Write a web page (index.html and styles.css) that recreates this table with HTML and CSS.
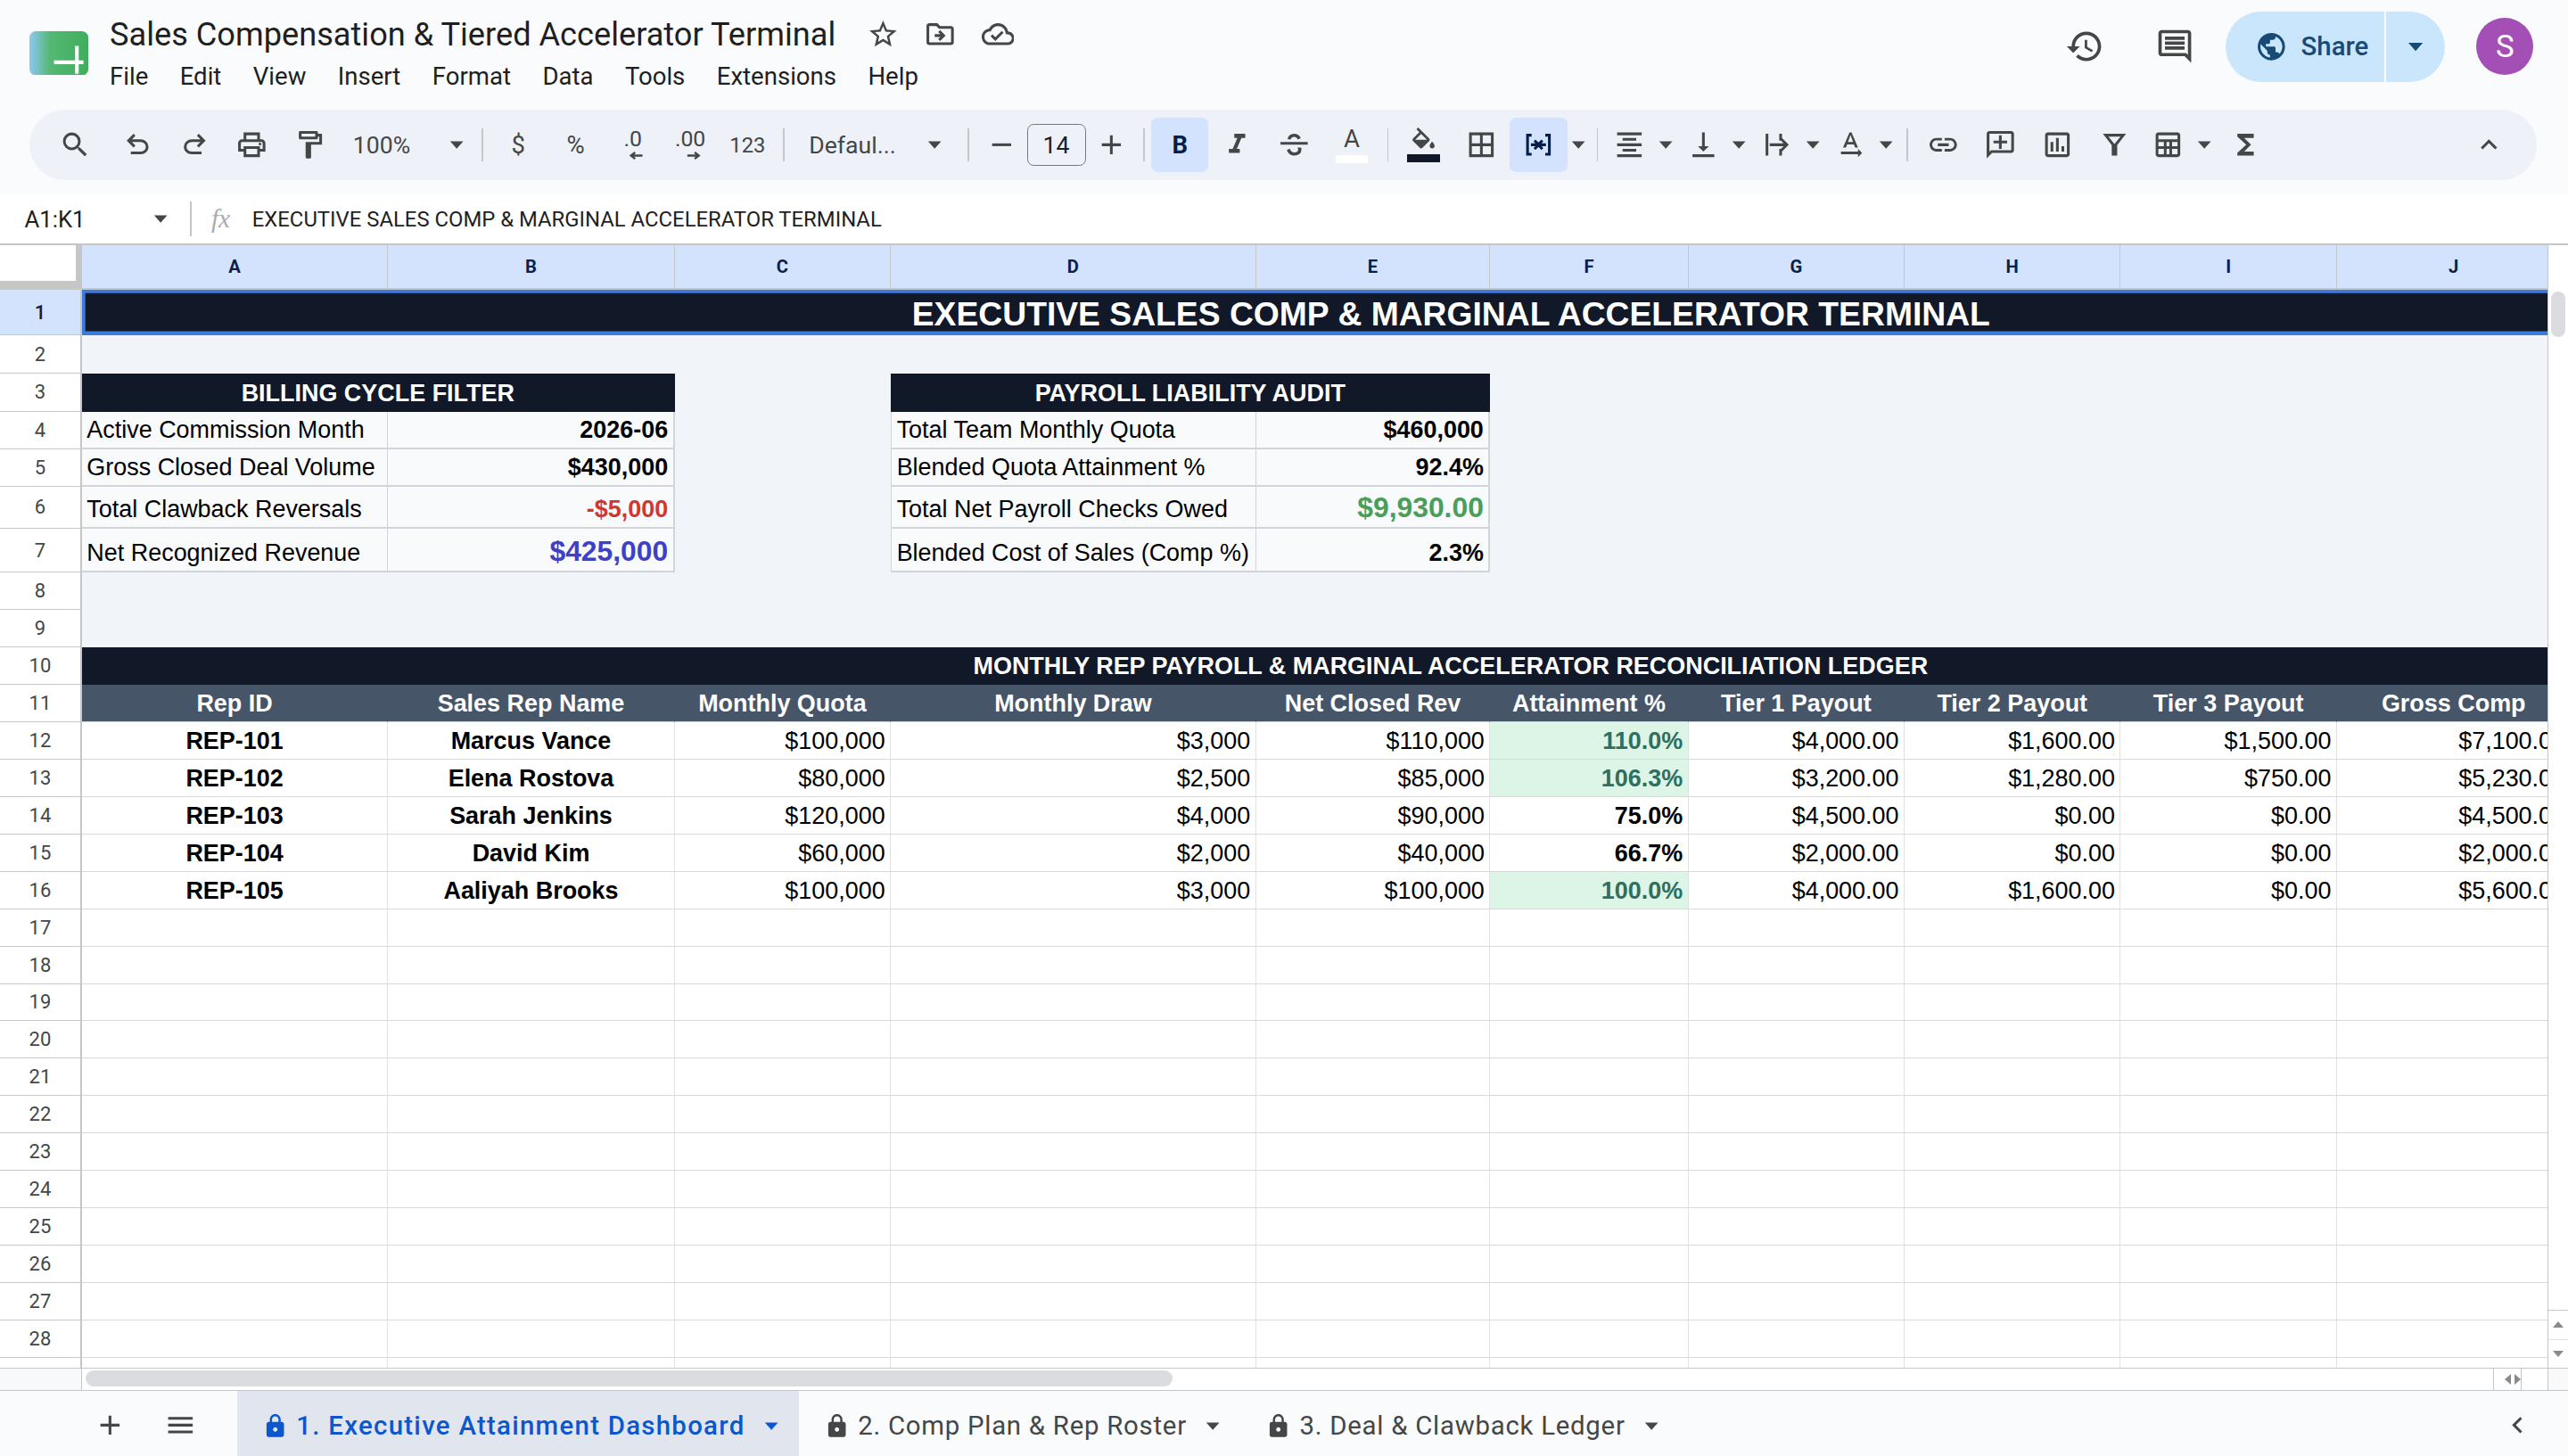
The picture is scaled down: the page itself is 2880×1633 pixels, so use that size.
FILE: index.html
```html
<!DOCTYPE html>
<html lang="en">
<head>
<meta charset="utf-8">
<title>Sales Compensation &amp; Tiered Accelerator Terminal</title>
<link rel="stylesheet" href="styles.css">
</head>
<body>
<div class="app">
  <header class="topbar">
    <svg class="logo" viewBox="0 0 36 27">
      <defs><linearGradient id="lg" x1="0" x2="1" y1="0" y2="0"><stop offset="0" stop-color="#8cc8f2"/><stop offset="0.35" stop-color="#55b873"/><stop offset="1" stop-color="#3fae5c"/></linearGradient></defs>
      <rect x="0" y="0" width="36" height="27" rx="4" fill="url(#lg)"/>
      <path d="M29 9v17M15 19h18" stroke="#fff" stroke-width="2.2" fill="none"/>
    </svg>
    <div class="doc">
      <div class="title-row">
        <span class="doc-title">Sales Compensation &amp; Tiered Accelerator Terminal</span>
        <div class="title-icons">
          <svg viewBox="0 0 24 24"><path d="M22 9.24l-7.19-.62L12 2 9.19 8.63 2 9.24l5.46 4.73L5.82 21 12 17.27 18.18 21l-1.63-7.03L22 9.24zM12 15.4l-3.76 2.27 1-4.28-3.32-2.88 4.38-.38L12 6.1l1.71 4.04 4.38.38-3.32 2.88 1 4.28L12 15.4z"/></svg>
          <svg viewBox="0 0 24 24"><path d="M20 6h-8l-2-2H4c-1.1 0-1.99.9-1.99 2L2 18c0 1.1.9 2 2 2h16c1.1 0 2-.9 2-2V8c0-1.1-.9-2-2-2zm0 12H4V6h5.17l2 2H20v10zm-7.84-6H8v2h4.16l-1.59 1.59L11.99 17 16 13.01 11.99 9l-1.41 1.41L12.16 12z"/></svg>
          <svg viewBox="0 0 24 24"><path d="M19.35 10.04C18.67 6.59 15.64 4 12 4 9.11 4 6.6 5.64 5.35 8.04 2.34 8.36 0 10.91 0 14c0 3.31 2.69 6 6 6h13c2.76 0 5-2.24 5-5 0-2.64-2.05-4.78-4.65-4.96zM19 18H6c-2.21 0-4-1.79-4-4 0-2.05 1.53-3.76 3.56-3.97l1.07-.11.5-.95C8.08 7.14 9.94 6 12 6c2.62 0 4.88 1.86 5.39 4.43l.3 1.5 1.53.11c1.56.1 2.78 1.41 2.78 2.96 0 1.65-1.35 3-3 3zm-9-3.82l-2.09-2.09L6.5 13.5 10 17l6.01-6.01-1.41-1.41z"/></svg>
        </div>
      </div>
      <nav class="menu">
        <span>File</span><span>Edit</span><span>View</span><span>Insert</span><span>Format</span><span>Data</span><span>Tools</span><span>Extensions</span><span>Help</span>
      </nav>
    </div>
    <div class="right">
      <svg class="hdr-icon hist" viewBox="0 0 24 24"><path d="M13 3c-4.97 0-9 4.03-9 9H1l3.89 3.89.07.14L9 12H6c0-3.87 3.13-7 7-7s7 3.13 7 7-3.13 7-7 7c-1.93 0-3.68-.79-4.94-2.06l-1.42 1.42C8.27 19.99 10.51 21 13 21c4.97 0 9-4.03 9-9s-4.03-9-9-9zm-1 5v5l4.28 2.54.72-1.21-3.5-2.08V8H12z"/></svg>
      <svg class="hdr-icon cmt" viewBox="0 0 24 24"><path d="M21.99 4c0-1.1-.89-2-1.99-2H4c-1.1 0-2 .9-2 2v12c0 1.1.9 2 2 2h14l4 4-.01-18zM20 4v13.17L18.83 16H4V4h16zM6 12h12v2H6zm0-3h12v2H6zm0-3h12v2H6z"/></svg>
      <div class="share">
        <div class="share-main">
          <svg class="globe" viewBox="0 0 24 24"><path d="M12 2C6.48 2 2 6.48 2 12s4.48 10 10 10 10-4.48 10-10S17.52 2 12 2zm-1 17.93c-3.95-.49-7-3.85-7-7.93 0-.62.08-1.21.21-1.79L9 15v1c0 1.1.9 2 2 2v1.93zm6.9-2.54c-.26-.81-1-1.39-1.9-1.39h-1v-3c0-.55-.45-1-1-1H8v-2h2c.55 0 1-.45 1-1V7h2c1.1 0 2-.9 2-2v-.41c2.93 1.19 5 4.06 5 7.41 0 2.08-.8 3.97-2.1 5.39z"/></svg>
          <span>Share</span>
        </div>
        <div class="share-caret"><svg viewBox="0 0 10 10"><path d="M1 3h8L5 7.5z"/></svg></div>
      </div>
      <div class="avatar">S</div>
    </div>
  </header>

  <div class="toolbar">
    <div class="tb first"><svg viewBox="0 0 24 24"><path d="M15.5 14h-.79l-.28-.27A6.47 6.47 0 0 0 16 9.5 6.5 6.5 0 1 0 9.5 16c1.61 0 3.09-.59 4.23-1.57l.27.28v.79l5 4.99L20.49 19l-4.99-5zm-6 0C7.01 14 5 11.99 5 9.5S7.01 5 9.5 5 14 7.01 14 9.5 11.99 14 9.5 14z"/></svg></div>
    <div class="tb"><svg viewBox="0 -960 960 960"><path d="M280-200v-80h284q63 0 109.5-40T720-420q0-60-46.5-100T564-560H312l104 104-56 56-200-200 200-200 56 56-104 104h252q97 0 166.5 63T800-420q0 94-69.5 157T564-200H280Z"/></svg></div>
    <div class="tb"><svg viewBox="0 -960 960 960"><path d="M396-200q-97 0-166.5-63T160-420q0-94 69.5-157T396-640h252L544-744l56-56 200 200-200 200-56-56 104-104H396q-63 0-109.5 40T240-420q0 60 46.5 100T396-280h284v80H396Z"/></svg></div>
    <div class="tb"><svg viewBox="0 0 24 24"><path d="M19 8h-1V3H6v5H5c-1.66 0-3 1.34-3 3v6h4v4h12v-4h4v-6c0-1.66-1.34-3-3-3zM8 5h8v3H8V5zm8 12v2H8v-4h8v2zm2-2v-2H6v2H4v-4c0-.55.45-1 1-1h14c.55 0 1 .45 1 1v4h-2z"/><circle cx="18" cy="11.5" r="1"/></svg></div>
    <div class="tb"><svg viewBox="0 0 24 24"><path d="M18 4V3c0-.55-.45-1-1-1H5c-.55 0-1 .45-1 1v4c0 .55.45 1 1 1h12c.55 0 1-.45 1-1V6h1v4H9v11c0 .55.45 1 1 1h2c.55 0 1-.45 1-1v-9h8V4h-3zm-2 2H6V4h10v2z"/></svg></div>
    <div class="tb-select zoomsel"><span>100%</span><svg class="caret" viewBox="0 0 10 10"><path d="M1 3h8L5 7.5z"/></svg></div>
    <div class="tb-sep"></div>
    <div class="tb txt">$</div>
    <div class="tb txt">%</div>
    <div class="tb"><div class="dec"><span>.0</span><svg viewBox="0 0 10 6"><path d="M9 3H2.5M4.5 1L2 3l2.5 2" stroke="#444746" stroke-width="1.3" fill="none"/></svg></div></div>
    <div class="tb"><div class="dec"><span>.00</span><svg viewBox="0 0 10 6"><path d="M1 3h6.5M5.5 1L8 3 5.5 5" stroke="#444746" stroke-width="1.3" fill="none"/></svg></div></div>
    <div class="tb txt small">123</div>
    <div class="tb-sep"></div>
    <div class="tb-select fontsel"><span>Defaul...</span><svg class="caret" viewBox="0 0 10 10"><path d="M1 3h8L5 7.5z"/></svg></div>
    <div class="tb-sep"></div>
    <div class="tb narrow"><svg viewBox="0 0 24 24"><path d="M5 11h14v2H5z"/></svg></div>
    <div class="fsize">14</div>
    <div class="tb narrow"><svg viewBox="0 0 24 24"><path d="M19 13h-6v6h-2v-6H5v-2h6V5h2v6h6v2z"/></svg></div>
    <div class="tb-sep"></div>
    <div class="tb active bold">B</div>
    <div class="tb"><svg viewBox="0 0 24 24"><path d="M10 4v3h2.21l-3.42 8H6v3h8v-3h-2.21l3.42-8H18V4z"/></svg></div>
    <div class="tb"><svg viewBox="0 -960 960 960"><path d="M486-160q-76 0-135-45t-85-123l88-38q14 48 48.5 79t85.5 31q42 0 76-20t34-64q0-18-7-33t-19-27h112q5 14 7.5 28.5T694-340q0 86-61.5 133T486-160ZM80-480v-80h800v80H80Zm402-326q66 0 115.5 32.5T674-674l-88 39q-9-29-33.5-52T484-710q-41 0-68 18.5T386-640h-96q2-69 54.5-117.5T482-806Z"/></svg></div>
    <div class="tb"><div class="colorA"><span>A</span><i class="bar white"></i></div></div>
    <div class="tb-sep"></div>
    <div class="tb"><div class="fillc"><svg viewBox="0 0 24 20"><path d="M16.56 8.94L7.62 0 6.21 1.41l2.38 2.38-5.15 5.15c-.59.59-.59 1.54 0 2.12l5.5 5.5c.29.29.68.44 1.06.44s.77-.15 1.06-.44l5.5-5.5c.59-.58.59-1.53 0-2.12zM5.21 10L10 5.21 14.79 10H5.21zM19 11.5s-2 2.17-2 3.5c0 1.1.9 2 2 2s2-.9 2-2c0-1.33-2-3.5-2-3.5z"/></svg><i class="bar dark"></i></div></div>
    <div class="tb"><svg viewBox="0 0 24 24"><path d="M3 3v18h18V3H3zm8 16H5v-6h6v6zm0-8H5V5h6v6zm8 8h-6v-6h6v6zm0-8h-6V5h6v6z"/></svg></div>
    <div class="tb active merge"><svg viewBox="0 0 24 24"><path d="M3 4h4v2H5v12h2v2H3zM21 4h-4v2h2v12h-2v2h4zM6.5 11h3.3L8.4 9.6 9.8 8.2 13.6 12l-3.8 3.8-1.4-1.4 1.4-1.4H6.5zM17.5 13h-3.3l1.4 1.4-1.4 1.4-3.8-3.8 3.8-3.8 1.4 1.4-1.4 1.4h3.3z"/></svg></div>
    <div class="tb-caret"><svg viewBox="0 0 10 10"><path d="M1 3h8L5 7.5z"/></svg></div>
    <div class="tb-sep"></div>
    <div class="combo"><svg viewBox="0 0 24 24"><path d="M7 15v2h10v-2H7zm-4 6h18v-2H3v2zm0-8h18v-2H3v2zm4-6v2h10V7H7zM3 3v2h18V3H3z"/></svg><svg class="caret" viewBox="0 0 10 10"><path d="M1 3h8L5 7.5z"/></svg></div>
    <div class="combo"><svg viewBox="0 0 24 24"><path d="M16 13h-3V3h-2v10H8l4 4 4-4zM4 19v2h16v-2H4z"/></svg><svg class="caret" viewBox="0 0 10 10"><path d="M1 3h8L5 7.5z"/></svg></div>
    <div class="combo"><svg viewBox="0 0 24 24"><path d="M4 4h2v16H4zM14 4h2v5h-2zM14 15h2v5h-2zM7 11h10.2l-2.6-2.6L16 7l5 5-5 5-1.4-1.4 2.6-2.6H7z"/></svg><svg class="caret" viewBox="0 0 10 10"><path d="M1 3h8L5 7.5z"/></svg></div>
    <div class="combo"><svg viewBox="0 0 24 24"><path d="M12.75 3h-1.5L6.5 14h2.1l.9-2.2h5l.9 2.2h2.1L12.75 3zm-2.62 7L12 4.98 13.87 10h-3.74zm10.37 8l-3-3v2H5v2h12.5v2l3-3z"/></svg><svg class="caret" viewBox="0 0 10 10"><path d="M1 3h8L5 7.5z"/></svg></div>
    <div class="tb-sep"></div>
    <div class="tb"><svg viewBox="0 0 24 24"><path d="M3.9 12c0-1.71 1.39-3.1 3.1-3.1h4V7H7c-2.76 0-5 2.24-5 5s2.24 5 5 5h4v-1.9H7c-1.71 0-3.1-1.39-3.1-3.1zM8 13h8v-2H8v2zm9-6h-4v1.9h4c1.71 0 3.1 1.39 3.1 3.1s-1.39 3.1-3.1 3.1h-4V17h4c2.76 0 5-2.24 5-5s-2.24-5-5-5z"/></svg></div>
    <div class="tb"><svg viewBox="0 0 24 24"><path d="M4 2h16c1.1 0 2 .9 2 2v12c0 1.1-.9 2-2 2H6l-4 4V4c0-1.1.9-2 2-2zm0 2v13.17L5.17 16H20V4H4zm7 1h2v4h4v2h-4v4h-2v-4H7V9h4z"/></svg></div>
    <div class="tb"><svg viewBox="0 0 24 24"><path d="M9 17H7v-7h2v7zm4 0h-2V7h2v10zm4 0h-2v-4h2v4zm2 2H5V5h14v14zm0-16H5c-1.1 0-2 .9-2 2v14c0 1.1.9 2 2 2h14c1.1 0 2-.9 2-2V5c0-1.1-.9-2-2-2z"/></svg></div>
    <div class="tb"><svg viewBox="0 0 24 24"><path d="M3.5 4h17l-6.5 8.2V20h-4v-7.8zM7.6 6l4.4 5.5V18h0V11.5L16.4 6z"/></svg></div>
    <div class="combo"><svg viewBox="0 0 24 24"><path d="M5 3h14c1.1 0 2 .9 2 2v14c0 1.1-.9 2-2 2H5c-1.1 0-2-.9-2-2V5c0-1.1.9-2 2-2zm0 2v3h14V5H5zm0 5v3h4v-3H5zm6 0v3h2v-3h-2zm4 0v3h4v-3h-4zM5 15v4h4v-4H5zm6 0v4h2v-4h-2zm4 0v4h4v-4h-4z"/></svg><svg class="caret" viewBox="0 0 10 10"><path d="M1 3h8L5 7.5z"/></svg></div>
    <div class="tb"><svg viewBox="0 0 24 24"><path d="M18 4H6v2l6.5 6L6 18v2h12v-3h-7l5-5-5-5h7z"/></svg></div>
    <div class="tb-spacer"></div>
    <div class="tb"><svg viewBox="0 0 24 24"><path d="M7.41 15.41L12 10.83l4.59 4.58L18 14l-6-6-6 6z"/></svg></div>
  </div>

  <div class="fbar">
    <div class="namebox">A1:K1</div>
    <svg class="caret nb-caret" viewBox="0 0 10 10"><path d="M1 3h8L5 7.5z"/></svg>
    <div class="fsep"></div>
    <span class="fx">fx</span>
    <div class="ftext">EXECUTIVE SALES COMP &amp; MARGINAL ACCELERATOR TERMINAL</div>
  </div>

  <div class="sheet">
    <div class="grid">
      <div class="colhead">
        <div class="corner"></div>
        <div class="ch c-a">A</div><div class="ch c-b">B</div><div class="ch c-c">C</div><div class="ch c-d">D</div><div class="ch c-e">E</div><div class="ch c-f">F</div><div class="ch c-g">G</div><div class="ch c-h">H</div><div class="ch c-i">I</div><div class="ch c-j">J</div><div class="ch c-k"></div>
      </div>

      <div class="row r1"><div class="rh sel">1</div><div class="cell c-ak dark title">EXECUTIVE SALES COMP &amp; MARGINAL ACCELERATOR TERMINAL</div></div>
      <div class="row r2"><div class="rh">2</div><div class="cell c-ak bg"></div></div>
      <div class="row r3"><div class="rh">3</div><div class="cell c-ab dark">BILLING CYCLE FILTER</div><div class="cell c-c bg"></div><div class="cell c-de dark">PAYROLL LIABILITY AUDIT</div><div class="cell c-fk bg"></div></div>
      <div class="row r4"><div class="rh">4</div><div class="cell c-a lbl">Active Commission Month</div><div class="cell c-b val">2026-06</div><div class="cell c-c bg"></div><div class="cell c-d lbl edge">Total Team Monthly Quota</div><div class="cell c-e val">$460,000</div><div class="cell c-fk bg"></div></div>
      <div class="row r5"><div class="rh">5</div><div class="cell c-a lbl">Gross Closed Deal Volume</div><div class="cell c-b val">$430,000</div><div class="cell c-c bg"></div><div class="cell c-d lbl edge">Blended Quota Attainment %</div><div class="cell c-e val">92.4%</div><div class="cell c-fk bg"></div></div>
      <div class="row r6"><div class="rh">6</div><div class="cell c-a lbl">Total Clawback Reversals</div><div class="cell c-b val neg">-$5,000</div><div class="cell c-c bg"></div><div class="cell c-d lbl edge">Total Net Payroll Checks Owed</div><div class="cell c-e val big green">$9,930.00</div><div class="cell c-fk bg"></div></div>
      <div class="row r7"><div class="rh">7</div><div class="cell c-a lbl">Net Recognized Revenue</div><div class="cell c-b val big blue">$425,000</div><div class="cell c-c bg"></div><div class="cell c-d lbl edge">Blended Cost of Sales (Comp %)</div><div class="cell c-e val">2.3%</div><div class="cell c-fk bg"></div></div>
      <div class="row"><div class="rh">8</div><div class="cell c-ak bg"></div></div>
      <div class="row"><div class="rh">9</div><div class="cell c-ak bg"></div></div>
      <div class="row"><div class="rh">10</div><div class="cell c-ak dark">MONTHLY REP PAYROLL &amp; MARGINAL ACCELERATOR RECONCILIATION LEDGER</div></div>
      <div class="row"><div class="rh">11</div><div class="cell c-a hd">Rep ID</div><div class="cell c-b hd">Sales Rep Name</div><div class="cell c-c hd">Monthly Quota</div><div class="cell c-d hd">Monthly Draw</div><div class="cell c-e hd">Net Closed Rev</div><div class="cell c-f hd">Attainment %</div><div class="cell c-g hd">Tier 1 Payout</div><div class="cell c-h hd">Tier 2 Payout</div><div class="cell c-i hd">Tier 3 Payout</div><div class="cell c-j hd">Gross Comp</div><div class="cell c-k hd"></div></div>

      <div class="row"><div class="rh">12</div><div class="cell c-a ctr">REP-101</div><div class="cell c-b ctr">Marcus Vance</div><div class="cell c-c num">$100,000</div><div class="cell c-d num">$3,000</div><div class="cell c-e num">$110,000</div><div class="cell c-f num att hi">110.0%</div><div class="cell c-g num">$4,000.00</div><div class="cell c-h num">$1,600.00</div><div class="cell c-i num">$1,500.00</div><div class="cell c-j num">$7,100.00</div><div class="cell c-k num"></div></div>
      <div class="row"><div class="rh">13</div><div class="cell c-a ctr">REP-102</div><div class="cell c-b ctr">Elena Rostova</div><div class="cell c-c num">$80,000</div><div class="cell c-d num">$2,500</div><div class="cell c-e num">$85,000</div><div class="cell c-f num att hi">106.3%</div><div class="cell c-g num">$3,200.00</div><div class="cell c-h num">$1,280.00</div><div class="cell c-i num">$750.00</div><div class="cell c-j num">$5,230.00</div><div class="cell c-k num"></div></div>
      <div class="row"><div class="rh">14</div><div class="cell c-a ctr">REP-103</div><div class="cell c-b ctr">Sarah Jenkins</div><div class="cell c-c num">$120,000</div><div class="cell c-d num">$4,000</div><div class="cell c-e num">$90,000</div><div class="cell c-f num att">75.0%</div><div class="cell c-g num">$4,500.00</div><div class="cell c-h num">$0.00</div><div class="cell c-i num">$0.00</div><div class="cell c-j num">$4,500.00</div><div class="cell c-k num"></div></div>
      <div class="row"><div class="rh">15</div><div class="cell c-a ctr">REP-104</div><div class="cell c-b ctr">David Kim</div><div class="cell c-c num">$60,000</div><div class="cell c-d num">$2,000</div><div class="cell c-e num">$40,000</div><div class="cell c-f num att">66.7%</div><div class="cell c-g num">$2,000.00</div><div class="cell c-h num">$0.00</div><div class="cell c-i num">$0.00</div><div class="cell c-j num">$2,000.00</div><div class="cell c-k num"></div></div>
      <div class="row"><div class="rh">16</div><div class="cell c-a ctr">REP-105</div><div class="cell c-b ctr">Aaliyah Brooks</div><div class="cell c-c num">$100,000</div><div class="cell c-d num">$3,000</div><div class="cell c-e num">$100,000</div><div class="cell c-f num att hi">100.0%</div><div class="cell c-g num">$4,000.00</div><div class="cell c-h num">$1,600.00</div><div class="cell c-i num">$0.00</div><div class="cell c-j num">$5,600.00</div><div class="cell c-k num"></div></div>

      <div class="row"><div class="rh">17</div><div class="cell c-a"></div><div class="cell c-b"></div><div class="cell c-c"></div><div class="cell c-d"></div><div class="cell c-e"></div><div class="cell c-f"></div><div class="cell c-g"></div><div class="cell c-h"></div><div class="cell c-i"></div><div class="cell c-j"></div><div class="cell c-k"></div></div>
      <div class="row"><div class="rh">18</div><div class="cell c-a"></div><div class="cell c-b"></div><div class="cell c-c"></div><div class="cell c-d"></div><div class="cell c-e"></div><div class="cell c-f"></div><div class="cell c-g"></div><div class="cell c-h"></div><div class="cell c-i"></div><div class="cell c-j"></div><div class="cell c-k"></div></div>
      <div class="row"><div class="rh">19</div><div class="cell c-a"></div><div class="cell c-b"></div><div class="cell c-c"></div><div class="cell c-d"></div><div class="cell c-e"></div><div class="cell c-f"></div><div class="cell c-g"></div><div class="cell c-h"></div><div class="cell c-i"></div><div class="cell c-j"></div><div class="cell c-k"></div></div>
      <div class="row"><div class="rh">20</div><div class="cell c-a"></div><div class="cell c-b"></div><div class="cell c-c"></div><div class="cell c-d"></div><div class="cell c-e"></div><div class="cell c-f"></div><div class="cell c-g"></div><div class="cell c-h"></div><div class="cell c-i"></div><div class="cell c-j"></div><div class="cell c-k"></div></div>
      <div class="row"><div class="rh">21</div><div class="cell c-a"></div><div class="cell c-b"></div><div class="cell c-c"></div><div class="cell c-d"></div><div class="cell c-e"></div><div class="cell c-f"></div><div class="cell c-g"></div><div class="cell c-h"></div><div class="cell c-i"></div><div class="cell c-j"></div><div class="cell c-k"></div></div>
      <div class="row"><div class="rh">22</div><div class="cell c-a"></div><div class="cell c-b"></div><div class="cell c-c"></div><div class="cell c-d"></div><div class="cell c-e"></div><div class="cell c-f"></div><div class="cell c-g"></div><div class="cell c-h"></div><div class="cell c-i"></div><div class="cell c-j"></div><div class="cell c-k"></div></div>
      <div class="row"><div class="rh">23</div><div class="cell c-a"></div><div class="cell c-b"></div><div class="cell c-c"></div><div class="cell c-d"></div><div class="cell c-e"></div><div class="cell c-f"></div><div class="cell c-g"></div><div class="cell c-h"></div><div class="cell c-i"></div><div class="cell c-j"></div><div class="cell c-k"></div></div>
      <div class="row"><div class="rh">24</div><div class="cell c-a"></div><div class="cell c-b"></div><div class="cell c-c"></div><div class="cell c-d"></div><div class="cell c-e"></div><div class="cell c-f"></div><div class="cell c-g"></div><div class="cell c-h"></div><div class="cell c-i"></div><div class="cell c-j"></div><div class="cell c-k"></div></div>
      <div class="row"><div class="rh">25</div><div class="cell c-a"></div><div class="cell c-b"></div><div class="cell c-c"></div><div class="cell c-d"></div><div class="cell c-e"></div><div class="cell c-f"></div><div class="cell c-g"></div><div class="cell c-h"></div><div class="cell c-i"></div><div class="cell c-j"></div><div class="cell c-k"></div></div>
      <div class="row"><div class="rh">26</div><div class="cell c-a"></div><div class="cell c-b"></div><div class="cell c-c"></div><div class="cell c-d"></div><div class="cell c-e"></div><div class="cell c-f"></div><div class="cell c-g"></div><div class="cell c-h"></div><div class="cell c-i"></div><div class="cell c-j"></div><div class="cell c-k"></div></div>
      <div class="row"><div class="rh">27</div><div class="cell c-a"></div><div class="cell c-b"></div><div class="cell c-c"></div><div class="cell c-d"></div><div class="cell c-e"></div><div class="cell c-f"></div><div class="cell c-g"></div><div class="cell c-h"></div><div class="cell c-i"></div><div class="cell c-j"></div><div class="cell c-k"></div></div>
      <div class="row"><div class="rh">28</div><div class="cell c-a"></div><div class="cell c-b"></div><div class="cell c-c"></div><div class="cell c-d"></div><div class="cell c-e"></div><div class="cell c-f"></div><div class="cell c-g"></div><div class="cell c-h"></div><div class="cell c-i"></div><div class="cell c-j"></div><div class="cell c-k"></div></div>
      <div class="row"><div class="rh"></div><div class="cell c-a"></div><div class="cell c-b"></div><div class="cell c-c"></div><div class="cell c-d"></div><div class="cell c-e"></div><div class="cell c-f"></div><div class="cell c-g"></div><div class="cell c-h"></div><div class="cell c-i"></div><div class="cell c-j"></div><div class="cell c-k"></div></div>
    </div>
    <div class="vscroll">
      <div class="vs-top"></div>
      <div class="vs-track">
        <div class="vs-thumb"></div>
        <div class="vs-arrows"><div class="vs-arrow"><i class="tri up"></i></div><div class="vs-arrow"><i class="tri down"></i></div></div>
      </div>
    </div>
  </div>

  <div class="hscroll">
    <div class="hs-left"></div>
    <div class="hs-track"><div class="hs-thumb"></div></div>
    <div class="hs-arrow"><i class="tri left"></i></div>
    <div class="hs-arrow"><i class="tri right"></i></div>
    <div class="hs-corner"></div>
  </div>

  <footer class="tabs">
    <div class="tab-btn"><svg viewBox="0 0 24 24"><path d="M19 13h-6v6h-2v-6H5v-2h6V5h2v6h6v2z"/></svg></div>
    <div class="tab-btn"><svg viewBox="0 0 24 24"><path d="M3 18h18v-2H3v2zm0-5h18v-2H3v2zm0-7v2h18V6H3z"/></svg></div>
    <div class="tab active">
      <svg class="lock" viewBox="0 0 24 24"><path d="M18 8h-1V6c0-2.76-2.24-5-5-5S7 3.24 7 6v2H6c-1.1 0-2 .9-2 2v10c0 1.1.9 2 2 2h12c1.1 0 2-.9 2-2V10c0-1.1-.9-2-2-2zm-6 9c-1.1 0-2-.9-2-2s.9-2 2-2 2 .9 2 2-.9 2-2 2zM9 8V6c0-1.66 1.34-3 3-3s3 1.34 3 3v2H9z"/></svg>
      <span>1. Executive Attainment Dashboard</span>
      <svg class="caret" viewBox="0 0 10 10"><path d="M1 3h8L5 7.5z"/></svg>
    </div>
    <div class="tab">
      <svg class="lock" viewBox="0 0 24 24"><path d="M18 8h-1V6c0-2.76-2.24-5-5-5S7 3.24 7 6v2H6c-1.1 0-2 .9-2 2v10c0 1.1.9 2 2 2h12c1.1 0 2-.9 2-2V10c0-1.1-.9-2-2-2zm-6 9c-1.1 0-2-.9-2-2s.9-2 2-2 2 .9 2 2-.9 2-2 2zM9 8V6c0-1.66 1.34-3 3-3s3 1.34 3 3v2H9z"/></svg>
      <span>2. Comp Plan &amp; Rep Roster</span>
      <svg class="caret" viewBox="0 0 10 10"><path d="M1 3h8L5 7.5z"/></svg>
    </div>
    <div class="tab">
      <svg class="lock" viewBox="0 0 24 24"><path d="M18 8h-1V6c0-2.76-2.24-5-5-5S7 3.24 7 6v2H6c-1.1 0-2 .9-2 2v10c0 1.1.9 2 2 2h12c1.1 0 2-.9 2-2V10c0-1.1-.9-2-2-2zm-6 9c-1.1 0-2-.9-2-2s.9-2 2-2 2 .9 2 2-.9 2-2 2zM9 8V6c0-1.66 1.34-3 3-3s3 1.34 3 3v2H9z"/></svg>
      <span>3. Deal &amp; Clawback Ledger</span>
      <svg class="caret" viewBox="0 0 10 10"><path d="M1 3h8L5 7.5z"/></svg>
    </div>
    <div class="tabs-spacer"></div>
    <div class="tab-btn nav"><svg viewBox="0 0 24 24"><path d="M15.41 7.41L14 6l-6 6 6 6 1.41-1.41L10.83 12z"/></svg></div>
  </footer>
</div>
</body>
</html>
```

FILE: styles.css
```css
* { box-sizing: border-box; margin: 0; padding: 0; }
html, body { margin: 0; background: #f9fbfd; overflow: hidden; }

.app {
  width: 1568px;
  height: 889px;
  zoom: 1.8367;
  display: flex;
  flex-direction: column;
  background: #f9fbfd;
  font-family: Roboto, "Liberation Sans", Arial, sans-serif;
  color: #1f1f1f;
  overflow: hidden;
}

/* ---------- top bar ---------- */
.topbar { height: 62px; flex: none; display: flex; align-items: flex-start; padding-left: 18px; }
.logo { width: 36px; height: 27px; margin-top: 19px; flex: none; }
.doc { margin-left: 13px; display: flex; flex-direction: column; }
.title-row { display: flex; align-items: center; height: 24px; margin-top: 9px; }
.doc-title { font-size: 19.7px; line-height: 24px; color: #1f1f1f; white-space: nowrap; }
.title-icons { display: flex; gap: 15px; margin-left: 19px; }
.title-icons svg { width: 20px; height: 20px; fill: #444746; }
.menu { display: flex; gap: 19.3px; margin-top: 4px; font-size: 15px; line-height: 20px; color: #1f1f1f; }

.right { margin-left: auto; display: flex; align-items: center; height: 57px; padding-right: 21px; }
.hdr-icon { width: 24px; height: 24px; fill: #444746; flex: none; }
.hist { margin-right: 31px; }
.cmt { margin-right: 19px; }
.share { display: flex; align-items: stretch; width: 134px; height: 43px; border-radius: 22px; background: #c9e6fc; color: #174a74; overflow: hidden; }
.share-main { display: flex; align-items: center; padding-left: 18px; width: 98px; border-right: 1.5px solid #fff; font-size: 16px; font-weight: 500; }
.globe { width: 20px; height: 20px; fill: #174a74; margin-right: 8px; }
.share-caret { flex: 1; display: flex; align-items: center; justify-content: center; }
.share-caret svg { width: 11px; height: 11px; fill: #174a74; }
.avatar { width: 35px; height: 35px; border-radius: 50%; background: #a34fb5; color: #fff; margin-left: 19px; display: flex; align-items: center; justify-content: center; font-size: 19px; }

/* ---------- toolbar ---------- */
.toolbar { flex: none; height: 43px; margin: 5px 19px 0 18px; border-radius: 22px; background: #eef2f8; display: flex; align-items: center; padding: 0 12px 0 10.5px; }
.tb { width: 35px; height: 33px; flex: none; display: flex; align-items: center; justify-content: center; border-radius: 4px; color: #444746; }
.tb svg { width: 20px; height: 20px; fill: #444746; }
.tb.first { margin-right: 3px; }
.tb.narrow { width: 31px; }
.tb.txt { font-size: 15px; }
.tb.txt.small { font-size: 13px; }
.tb.active { background: #d3e3fd; }
.tb.bold { font-weight: 700; font-size: 15px; color: #041e49; }
.tb.merge svg { fill: #041e49; }
.tb-select { height: 33px; flex: none; display: flex; align-items: center; justify-content: space-between; font-size: 14.5px; color: #444746; }
.zoomsel { width: 83.5px; padding: 0 6px 0 9px; }
.fontsel { width: 104px; padding: 0 11px 0 11px; }
.caret { width: 10px; height: 10px; fill: #444746; flex: none; }
.tb-sep { width: 1px; height: 20px; background: #c7c7c7; margin: 0 4px; flex: none; }
.tb-caret { width: 14px; height: 33px; display: flex; align-items: center; justify-content: center; flex: none; }
.tb-caret svg { width: 10px; height: 10px; fill: #444746; }
.combo { width: 45px; height: 33px; flex: none; display: flex; align-items: center; }
.combo svg:first-child { width: 20px; height: 20px; fill: #444746; margin: 0 5px; }
.combo .caret { margin-left: 2px; }
.tb-spacer { flex: 1; }
.dec { display: flex; flex-direction: column; align-items: center; font-size: 13.5px; line-height: 12px; color: #444746; }
.dec svg { width: 10px; height: 6px; margin-top: 1px; margin-left: 4px; }
.fsize { width: 36px; height: 26px; flex: none; border: 1px solid #747775; border-radius: 4px; display: flex; align-items: center; justify-content: center; font-size: 14.5px; color: #1f1f1f; }
.colorA { display: flex; flex-direction: column; align-items: center; font-size: 15px; line-height: 15px; color: #444746; }
.fillc { display: flex; flex-direction: column; align-items: center; }
.fillc svg { width: 18px; height: 15px; }
.bar { display: block; width: 20px; height: 5px; margin-top: 2px; }
.bar.white { background: #fff; }
.bar.dark { background: #111827; margin-top: 1px; }

/* ---------- formula bar ---------- */
.fbar { flex: none; height: 31.5px; margin-top: 8.5px; background: #fff; border-bottom: 1.3px solid #c4c7c5; display: flex; align-items: center; }
.namebox { width: 78px; padding-left: 15px; font-size: 14px; color: #1f1f1f; }
.nb-caret { margin-left: 15px; }
.fsep { width: 1px; height: 21px; background: #c4c7c5; margin-left: 13px; }
.fx { margin-left: 12px; width: 18px; font-family: "Liberation Serif", serif; font-style: italic; font-size: 16px; color: #a8abaf; }
.ftext { margin-left: 7px; font-size: 13px; color: #1f1f1f; white-space: nowrap; }

/* ---------- sheet ---------- */
.sheet { flex: 1; min-height: 0; display: flex; background: #fff; }
.grid { flex: 1; min-width: 0; overflow: hidden; display: flex; flex-direction: column; }
.colhead { height: 27px; flex: none; display: flex; }
.corner { width: 50px; flex: none; background: #fff; border-right: 4px solid #c4c7c5; border-bottom: 5.5px solid #c4c7c5; }
.ch { flex: none; height: 100%; background: #d3e3fd; border-right: 1px solid #c4c7c5; border-bottom: 1.3px solid #c4c7c5; display: flex; align-items: center; justify-content: center; font-size: 11px; font-weight: 700; color: #0b1f4a; }

.c-a { width: 187px; } .c-b { width: 175px; } .c-c { width: 132px; } .c-d { width: 223px; }
.c-e { width: 143px; } .c-f { width: 121px; } .c-g { width: 132px; } .c-h { width: 132px; }
.c-i { width: 132px; } .c-j { width: 143px; } .c-k { width: 152px; }
.c-ak { width: 1672px; } .c-ab { width: 362px; } .c-de { width: 366px; } .c-fk { width: 812px; }

.row { display: flex; flex: none; height: 22.85px; }
.r1 { height: 28px; } .r2 { height: 23px; } .r3 { height: 23.5px; } .r4 { height: 23px; }
.r5 { height: 22.6px; } .r6 { height: 26px; } .r7 { height: 26.5px; }

.rh { width: 50px; flex: none; height: 100%; background: #fff; border-right: 1.3px solid #c4c7c5; border-bottom: 1px solid #c4c7c5; display: flex; align-items: center; justify-content: center; font-size: 12px; color: #444746; }
.rh.sel { background: #d3e3fd; color: #0b1f4a; font-weight: 500; }

.cell { flex: none; height: 100%; border-right: 1px solid #e1e1e1; border-bottom: 1px solid #d9d9d9; display: flex; align-items: flex-end; padding: 0 3px 2px; font-family: "Liberation Sans", Arial, sans-serif; font-size: 14.67px; line-height: 17px; color: #000; white-space: nowrap; overflow: hidden; background: #fff; }
.bg { background: #f1f5f9; border-color: #f1f5f9; }
.dark { background: #111827; border-color: #111827; color: #fff; font-weight: 700; justify-content: center; }
.title { font-size: 20.3px; line-height: 23px; border: none; padding-bottom: 2px; box-shadow: inset 0 2px 0 #3b7be0, inset 2px 0 0 #3b7be0, inset 0 -2.5px 0 #3b7be0; }
.lbl { background: #f8fafc; border-right-color: #d1d5db; border-bottom: 1.2px solid #d1d5db; }
.lbl.edge { border-left: 1px solid #d1d5db; }
.val { background: #f8fafc; border-right: 1.2px solid #d1d5db; border-bottom: 1.2px solid #d1d5db; justify-content: flex-end; font-weight: 700; }
.val.big { font-size: 17.33px; line-height: 20px; }
.neg { color: #d0372f; }
.blue { color: #3f3fc8; }
.green { color: #4a9e58; }
.hd { background: #475569; border-right-color: #475569; border-bottom-color: #d0d4da; color: #fff; font-weight: 700; justify-content: center; }
.ctr { justify-content: center; font-weight: 700; }
.num { justify-content: flex-end; }
.att { font-weight: 700; }
.hi { background: #dcf5e6; color: #2e6f5f; }

/* ---------- scrollbars ---------- */
.vscroll { width: 12.5px; flex: none; display: flex; flex-direction: column; border-left: 1px solid #c4c7c5; background: #fff; }
.vs-top { height: 27px; flex: none; }
.vs-track { flex: 1; display: flex; flex-direction: column; }
.vs-thumb { width: 9px; height: 28px; margin: 1px 0 0 1.5px; border-radius: 5px; background: #dadce0; }
.vs-arrows { margin-top: auto; height: 35px; border-top: 1px solid #c4c7c5; display: flex; flex-direction: column; }
.vs-arrow { flex: 1; display: flex; align-items: center; justify-content: center; }
.vs-arrow + .vs-arrow { border-top: 1px solid #e3e3e3; }
.tri { display: block; width: 0; height: 0; border: 3.5px solid transparent; }
.tri.up { border-bottom: 4px solid #8a8a8a; border-top-width: 0; }
.tri.down { border-top: 4px solid #8a8a8a; border-bottom-width: 0; }
.tri.left { border-right: 4px solid #8a8a8a; border-left-width: 0; }
.tri.right { border-left: 4px solid #8a8a8a; border-right-width: 0; }

.hscroll { flex: none; height: 14px; display: flex; border-top: 1px solid #c4c7c5; background: #fff; }
.hs-left { width: 50px; flex: none; background: #f8f9fa; border-right: 1px solid #c4c7c5; }
.hs-track { flex: 1; }
.hs-thumb { width: 664px; height: 9.6px; margin: 1.5px 0 0 2px; border-radius: 5px; background: #dadce0; }
.hs-arrow { width: 16.5px; flex: none; border-left: 1px solid #c4c7c5; display: flex; align-items: center; justify-content: center; }
.hs-corner { width: 12.5px; flex: none; border-left: 1px solid #c4c7c5; background: #f8f9fa; }

/* ---------- sheet tabs ---------- */
.tabs { flex: none; height: 40px; display: flex; align-items: stretch; border-top: 1px solid #c4c7c5; background: #f9fbfd; padding-left: 50px; }
.tab-btn { width: 34px; flex: none; display: flex; align-items: center; justify-content: center; padding-top: 2px; }
.tab-btn + .tab-btn { margin-left: 9px; }
.tab-btn svg { width: 20px; height: 20px; fill: #444746; }
.tab { display: flex; align-items: center; padding: 3px 12px 0 15px; font-size: 16px; letter-spacing: 0.4px; color: #444746; white-space: nowrap; flex: none; }
.tab.active { margin-left: 18px; background: #e1e6ee; color: #0b57d0; font-weight: 500; letter-spacing: 0.7px; }
.tab .lock { width: 16px; height: 18px; fill: #444746; margin-right: 5px; }
.tab.active .lock { fill: #0b57d0; }
.tab .caret { margin-left: 11px; fill: #444746; }
.tab.active .caret { fill: #0b57d0; }
.tabs-spacer { flex: 1; }
.tab-btn.nav { margin-right: 14px; }
```
